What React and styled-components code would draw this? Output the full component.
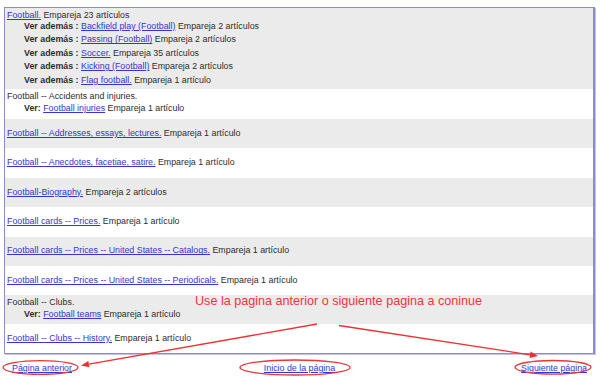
import styled, { createGlobalStyle } from 'styled-components';

const GlobalStyle = createGlobalStyle`
	html, body {
		margin: 0;
		padding: 0;
		background: #ffffff;
	}
	body {
		font-family: 'Liberation Sans', Arial, sans-serif;
		font-size: 8.85px;
		color: #2e2e2e;
	}
`;

const Page = styled.div`
	position: relative;
	width: 600px;
	height: 377px;
	padding: 7px 5px 0 4px;
	box-sizing: border-box;
	overflow: hidden;
`;

const ResultsBox = styled.div`
	border: 1px solid #8c8cc9;
	border-right-width: 2px;
	box-shadow: 1px 1px 0 #c4c4e2;
`;

const Row = styled.div`
	display: flex;
	flex-direction: column;
	justify-content: ${(p) => (p.$group ? 'flex-start' : 'center')};
	height: ${(p) => p.$h}px;
	padding: ${(p) => (p.$group ? '2px' : '0')} 2px 0 2px;
	box-sizing: border-box;
	background: ${(p) => (p.$shade ? '#ebebeb' : '#ffffff')};
	line-height: 11.6px;
	white-space: nowrap;
`;

const MainLine = styled.div`
	line-height: ${(p) => p.$lh || 11.6}px;
	padding-top: ${(p) => p.$pt || 0}px;
`;

const SubLine = styled.div`
	padding-left: 17px;
	line-height: ${(p) => p.$lh || 11.6}px;
`;

const Label = styled.b`
	color: #2e2e2e;
	font-weight: bold;
`;

const Link = styled.a`
	color: #3535d2;
	text-decoration: underline;
	cursor: pointer;
`;

const Nav = styled.div`
	display: grid;
	grid-template-columns: 1fr auto 1fr;
	padding: 9px 8px 0 8px;
	line-height: 11px;
	a:first-child {
		justify-self: start;
	}
	a:last-child {
		justify-self: end;
	}
`;

const Annotation = styled.div`
	position: absolute;
	left: 195px;
	top: 294px;
	color: #f5333a;
	font-size: 12.6px;
	line-height: 15px;
	white-space: nowrap;
`;

const Overlay = styled.svg`
	position: absolute;
	left: 0;
	top: 0;
	pointer-events: none;
`;

const rows = [
	{ link: 'Football -- Addresses, essays, lectures.', count: 'Empareja 1 artículo' },
	{ link: 'Football -- Anecdotes, facetiae, satire.', count: 'Empareja 1 artículo' },
	{ link: 'Football-Biography.', count: 'Empareja 2 artículos' },
	{ link: 'Football cards -- Prices.', count: 'Empareja 1 artículo' },
	{ link: 'Football cards -- Prices -- United States -- Catalogs.', count: 'Empareja 1 artículo' },
	{ link: 'Football cards -- Prices -- United States -- Periodicals.', count: 'Empareja 1 artículo' },
];

const seeAlso = [
	{ link: 'Backfield play (Football)', count: 'Empareja 2 artículos' },
	{ link: 'Passing (Football)', count: 'Empareja 2 artículos' },
	{ link: 'Soccer.', count: 'Empareja 35 artículos' },
	{ link: 'Kicking (Football)', count: 'Empareja 2 artículos' },
	{ link: 'Flag football.', count: 'Empareja 1 artículo' },
];

function Arrow({ x1, y1, x2, y2 }) {
	const a = Math.atan2(y2 - y1, x2 - x1);
	const len = 8;
	const w = 3.2;
	const bx = x2 - len * Math.cos(a);
	const by = y2 - len * Math.sin(a);
	const px = -Math.sin(a) * w;
	const py = Math.cos(a) * w;
	return (
		<g>
			<line x1={x1} y1={y1} x2={bx} y2={by} stroke="#ee3030" strokeWidth="1.3" />
			<polygon
				points={`${x2},${y2} ${bx + px},${by + py} ${bx - px},${by - py}`}
				fill="#ee3030"
			/>
		</g>
	);
}

export default function App() {
	return (
		<>
			<GlobalStyle />
			<Page>
				<ResultsBox>
					<Row $shade $group $h={81}>
						<MainLine $lh={9} $pt={1}>
							<Link>Football.</Link> Empareja 23 artículos
						</MainLine>
						{seeAlso.map((s) => (
							<SubLine key={s.link} $lh={13.4}>
								<Label>Ver además :</Label> <Link>{s.link}</Link> {s.count}
							</SubLine>
						))}
					</Row>
					<Row $group $h={30}>
						<MainLine>Football -- Accidents and injuries.</MainLine>
						<SubLine>
							<Label>Ver:</Label> <Link>Football injuries</Link> Empareja 1 artículo
						</SubLine>
					</Row>
					{rows.map((r, i) => (
						<Row key={r.link} $shade={i % 2 === 0} $h={29.4}>
							<MainLine>
								<Link>{r.link}</Link> {r.count}
							</MainLine>
						</Row>
					))}
					<Row $shade $group $h={29}>
						<MainLine>Football -- Clubs.</MainLine>
						<SubLine>
							<Label>Ver:</Label> <Link>Football teams</Link> Empareja 1 artículo
						</SubLine>
					</Row>
					<Row $h={28.5}>
						<MainLine>
							<Link>Football -- Clubs -- History.</Link> Empareja 1 artículo
						</MainLine>
					</Row>
				</ResultsBox>
				<Nav>
					<Link>Página anterior</Link>
					<Link>Inicio de la página</Link>
					<Link>Siguiente página</Link>
				</Nav>
				<Annotation>Use la pagina anterior o siguiente pagina a coninue</Annotation>
				<Overlay width="600" height="377" viewBox="0 0 600 377">
					<Arrow x1={317} y1={324} x2={81} y2={365.5} />
					<Arrow x1={339} y1={325.5} x2={538} y2={356} />
					<ellipse cx="40.5" cy="367.5" rx="37.5" ry="6.8" fill="none" stroke="#e8363a" strokeWidth="1.3" />
					<ellipse cx="295" cy="367.5" rx="55" ry="7.5" fill="none" stroke="#e8363a" strokeWidth="1.3" />
					<ellipse cx="553" cy="367.3" rx="38" ry="6.8" fill="none" stroke="#e8363a" strokeWidth="1.3" />
				</Overlay>
			</Page>
		</>
	);
}
